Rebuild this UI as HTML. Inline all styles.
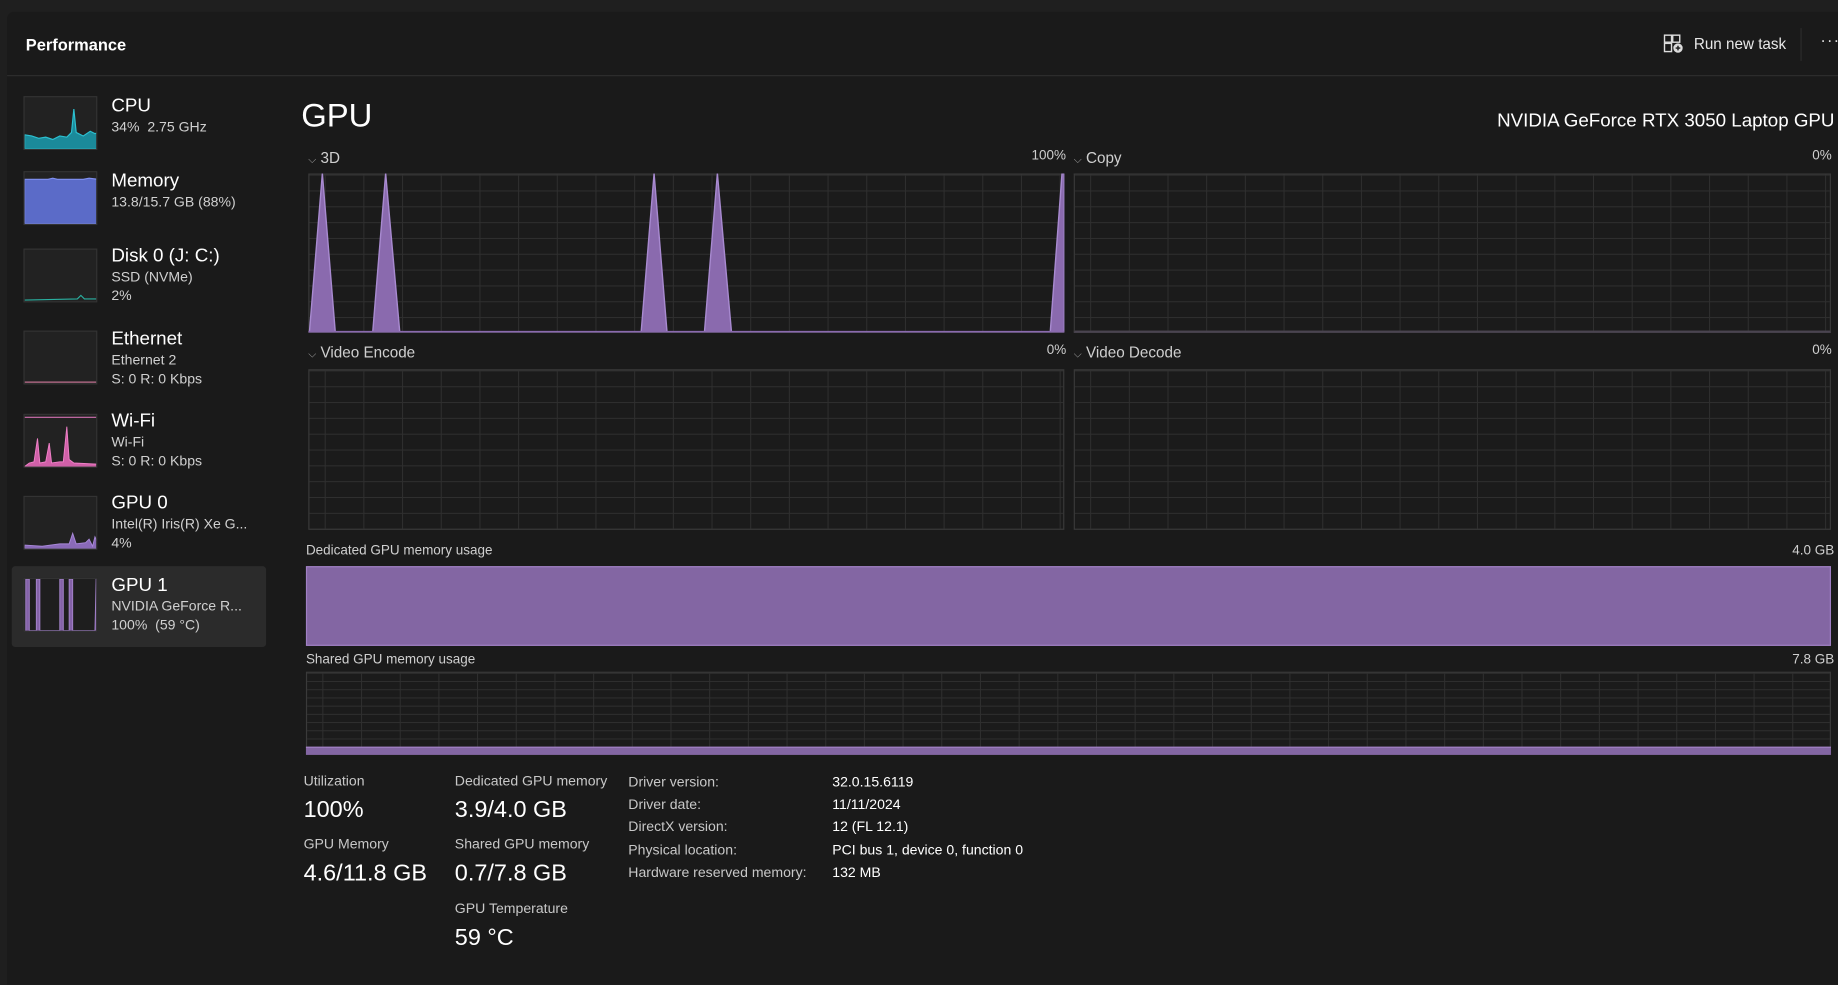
<!DOCTYPE html>
<html><head><meta charset="utf-8"><style>
html,body{margin:0;padding:0;background:#1f1f1f;overflow:hidden;width:1838px;height:967px}
#s{position:absolute;left:0;top:0;width:1568px;height:825px;transform:scale(1.17219);transform-origin:0 0;font-family:"Liberation Sans",sans-serif;color:#fff}
.a{position:absolute;white-space:nowrap}
.panel{position:absolute;left:6px;top:10px;width:1570px;height:830px;background:#1a1a1a;border-radius:6px 0 0 0}
.th{position:absolute;left:20px;width:63px;height:46px;background:#222;border:1px solid #333;box-sizing:border-box;overflow:hidden}
.t1{font-size:16px;color:#fff}
.t2{font-size:12px;color:#d0d0d0;line-height:15.5px}
.ch{position:absolute;border:1px solid #3a3a3a;box-sizing:border-box;
background-color:#1b1b1b;
background-image:linear-gradient(to right,#2f2f2f 1px,transparent 1px),linear-gradient(to bottom,#2f2f2f 1px,transparent 1px);
background-size:33px 100%,100% 13.5px;background-position:-20px 0,0 0}
.lbl{font-size:13px;color:#cfcfcf}
.sm{font-size:11.5px;color:#cfcfcf}
.sl{font-size:12px;color:#c8c8c8}
.sv{font-size:20px;color:#fff}
</style></head><body><div id="s">
<div class="panel"></div>
<div class="a" style="left:22px;top:30px;font-size:14px;font-weight:bold">Performance</div>
<div class="a" style="left:6px;top:64px;width:1562px;height:1px;background:#2c2c2c"></div>
<svg class="a" style="left:1419px;top:29px" width="18" height="17" viewBox="0 0 18 17" fill="none" stroke="#ddd" stroke-width="1.2"><rect x="1" y="1" width="6" height="6"/><rect x="8" y="1" width="6" height="6"/><rect x="1" y="8" width="6" height="7"/><circle cx="12.5" cy="12" r="4" fill="#ddd" stroke="none"/><path d="M12.5 10v4M10.5 12h4" stroke="#1a1a1a" stroke-width="1.2"/></svg>
<div class="a" style="left:1445px;top:30px;font-size:13px;color:#e8e8e8">Run new task</div>
<div class="a" style="left:1536px;top:24px;width:1px;height:28px;background:#2c2c2c"></div>
<div class="a" style="left:1553px;top:26px;font-size:14px;color:#ddd;letter-spacing:1px">···</div>

<div class="a" style="left:10px;top:483px;width:217px;height:69px;background:#2b2b2b;border-radius:3px"></div>
<div class="th" style="top:82px"><svg width="63" height="44" viewBox="0 0 63 44" preserveAspectRatio="none"><path d="M0 32 L6 33 L12 35 L18 34 L24 36 L30 33 L36 34 L40 30 L42 10 L44 30 L50 33 L56 29 L60 31 L63 30 L63 44 L0 44Z" fill="#1b8a9a" stroke="#2cc0d0" stroke-width="1"/></svg></div>
<div class="a t1" style="left:95px;top:82px">CPU</div>
<div class="a t2" style="left:95px;top:101px">34%&nbsp; 2.75 GHz</div>
<div class="th" style="top:146px"><svg width="63" height="44" viewBox="0 0 63 44" preserveAspectRatio="none"><path d="M0 6 L20 6 L24 5 L28 6 L50 6 L55 5 L63 6 L63 44 L0 44Z" fill="#5b6bc8" stroke="#8090f0"/></svg></div>
<div class="a t1" style="left:95px;top:146px">Memory</div>
<div class="a t2" style="left:95px;top:165px">13.8/15.7 GB (88%)</div>
<div class="th" style="top:212px"><svg width="63" height="44" viewBox="0 0 63 44" preserveAspectRatio="none"><path d="M0 43 L45 42 L48 39 L51 42 L63 42" fill="none" stroke="#2ab0a0"/></svg></div>
<div class="a t1" style="left:95px;top:210px">Disk 0 (J: C:)</div>
<div class="a t2" style="left:95px;top:229px">SSD (NVMe)<br>2%</div>
<div class="th" style="top:282px"><svg width="63" height="44"><path d="M0 43 L63 43" stroke="#c07090"/></svg></div>
<div class="a t1" style="left:95px;top:281px">Ethernet</div>
<div class="a t2" style="left:95px;top:300px">Ethernet 2<br>S: 0 R: 0 Kbps</div>
<div class="th" style="top:353px"><svg width="63" height="44" viewBox="0 0 63 44" preserveAspectRatio="none"><path d="M0 2 L63 2" stroke="#d070b0"/><path d="M0 44 L4 41 L8 40 L11 20 L13 41 L18 40 L21 24 L23 41 L30 40 L33 40 L36 10 L38 38 L42 41 L63 42 L63 44Z" fill="#d060a8" stroke="#f080c8" stroke-width=".8"/></svg></div>
<div class="a t1" style="left:95px;top:351px">Wi-Fi</div>
<div class="a t2" style="left:95px;top:370px">Wi-Fi<br>S: 0 R: 0 Kbps</div>
<div class="th" style="top:423px"><svg width="63" height="44" viewBox="0 0 63 44" preserveAspectRatio="none"><path d="M0 44 L0 41 L15 42 L30 40 L38 40 L41 31 L44 40 L52 39 L55 36 L58 42 L60 34 L63 40 L63 44Z" fill="#8a6ab8" stroke="#a888d8" stroke-width=".8"/></svg></div>
<div class="a t1" style="left:95px;top:421px">GPU 0</div>
<div class="a t2" style="left:95px;top:440px">Intel(R) Iris(R) Xe G...<br>4%</div>
<div class="th" style="top:493px;background:#1e1e1e"><svg width="63" height="46" viewBox="0 0 63 46" preserveAspectRatio="none"><path d="M1 46 L1 0 L4 0 L4 44 L10 44 L10 0 L13 0 L13 44 L30 44 L30 0 L33 0 L33 44 L38 44 L38 0 L41 0 L41 44 L60 44 L61 0 L63 0 L63 46Z" fill="#8462a8" stroke="#a584cc" stroke-width=".8"/></svg></div>
<div class="a t1" style="left:95px;top:491px">GPU 1</div>
<div class="a t2" style="left:95px;top:510px">NVIDIA GeForce R...<br>100%&nbsp; (59 °C)</div>

<div class="a" style="left:257px;top:83px;font-size:28px">GPU</div>
<div class="a" style="right:3px;top:95px;font-size:16px">NVIDIA GeForce RTX 3050 Laptop GPU</div>

<div class="a lbl" style="left:263px;top:127px"><span style="font-size:9px;color:#999">⌵</span> 3D</div>
<div class="a sm" style="left:880px;top:127px">100%</div>
<div class="ch" style="left:263px;top:148px;width:645px;height:136px"></div>
<svg class="a" style="left:263px;top:148px" width="645" height="136"><g fill="#8a6aae" stroke="#a88ad0" stroke-width="1.2"><path d="M1 135 L12 0 L23 135Z"/><path d="M55 135 L66 0 L78 135Z"/><path d="M284 135 L295 0 L306 135Z"/><path d="M338 135 L349 0 L361 135Z"/><path d="M633 135 L643 0 L645 0 L645 135Z"/></g><path d="M0 135 L645 135" stroke="#8a6aae" stroke-width="1.5"/></svg>

<div class="a lbl" style="left:916px;top:127px"><span style="font-size:9px;color:#999">⌵</span> Copy</div>
<div class="a sm" style="left:1546px;top:127px">0%</div>
<div class="ch" style="left:916px;top:148px;width:646px;height:136px;border-bottom:2px solid #4a4450"></div>

<div class="a lbl" style="left:263px;top:293px"><span style="font-size:9px;color:#999">⌵</span> Video Encode</div>
<div class="a sm" style="left:893px;top:293px">0%</div>
<div class="ch" style="left:263px;top:315px;width:645px;height:137px"></div>
<div class="a lbl" style="left:916px;top:293px"><span style="font-size:9px;color:#999">⌵</span> Video Decode</div>
<div class="a sm" style="left:1546px;top:293px">0%</div>
<div class="ch" style="left:916px;top:315px;width:646px;height:137px"></div>

<div class="a sm" style="left:261px;top:464px">Dedicated GPU memory usage</div>
<div class="a sm" style="left:1529px;top:464px">4.0 GB</div>
<div class="a" style="left:261px;top:483px;width:1301px;height:68px;background:#8366a3;border:1px solid #a080c4;box-sizing:border-box"></div>

<div class="a sm" style="left:261px;top:557px">Shared GPU memory usage</div>
<div class="a sm" style="left:1529px;top:557px">7.8 GB</div>
<div class="ch" style="left:261px;top:573px;width:1301px;height:71px;background-size:33px 100%,100% 7px"></div>
<div class="a" style="left:261px;top:637px;width:1301px;height:7px;background:#8366a3;border-top:1px solid #a080c4;box-sizing:border-box"></div>

<div class="a sl" style="left:259px;top:659px">Utilization</div>
<div class="a sv" style="left:259px;top:680px">100%</div>
<div class="a sl" style="left:259px;top:713px">GPU Memory</div>
<div class="a sv" style="left:259px;top:734px">4.6/11.8 GB</div>
<div class="a sl" style="left:388px;top:659px">Dedicated GPU memory</div>
<div class="a sv" style="left:388px;top:680px">3.9/4.0 GB</div>
<div class="a sl" style="left:388px;top:713px">Shared GPU memory</div>
<div class="a sv" style="left:388px;top:734px">0.7/7.8 GB</div>
<div class="a sl" style="left:388px;top:768px">GPU Temperature</div>
<div class="a sv" style="left:388px;top:789px">59 °C</div>
<div class="a sl" style="left:536px;top:658px;line-height:19.2px">Driver version:<br>Driver date:<br>DirectX version:<br>Physical location:<br>Hardware reserved memory:</div>
<div class="a sl" style="left:710px;top:658px;line-height:19.2px;color:#fff">32.0.15.6119<br>11/11/2024<br>12 (FL 12.1)<br>PCI bus 1, device 0, function 0<br>132 MB</div>
</div></body></html>
